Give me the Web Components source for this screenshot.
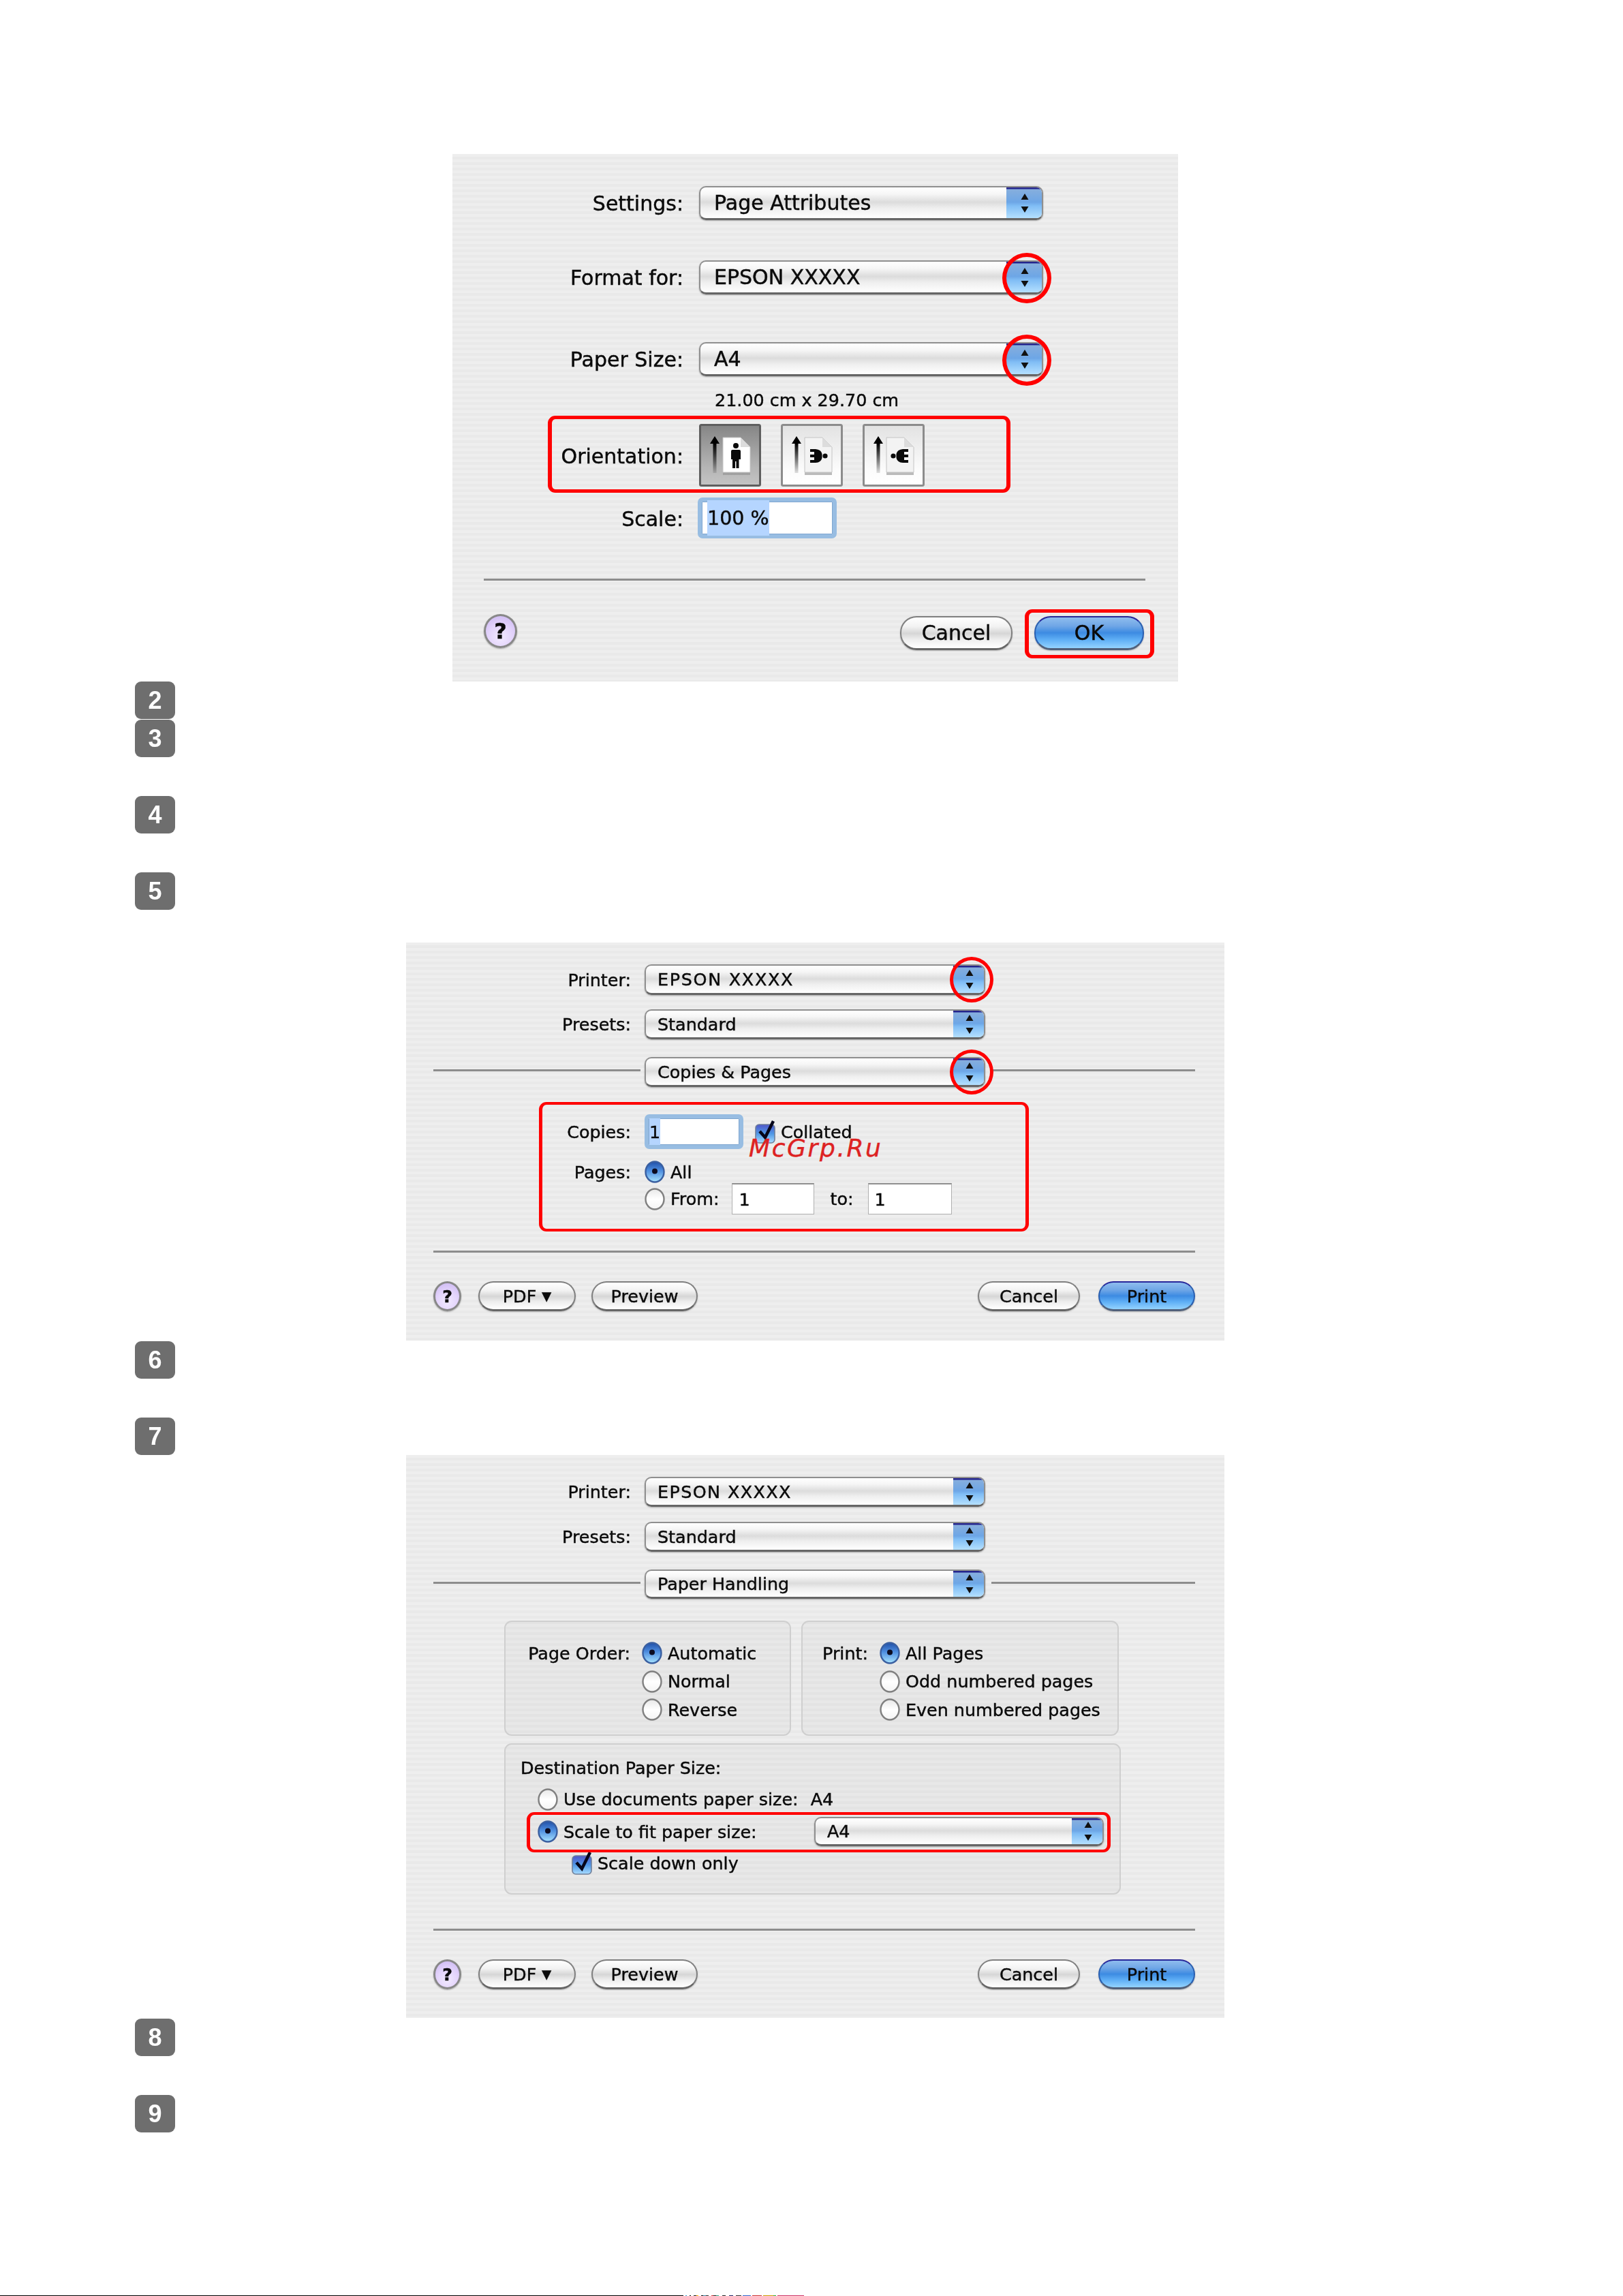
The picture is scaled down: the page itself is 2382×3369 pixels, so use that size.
<!DOCTYPE html>
<html lang="en"><head><meta charset="utf-8"><title>Epson print settings</title>
<style>
html,body{margin:0;padding:0;background:#fff}
</style></head><body>
<script>
function def(name, html){
  class C extends HTMLElement{
    constructor(){super();const r=this.attachShadow({mode:'open'});r.innerHTML=typeof html==='function'?html(this):html;}
    connectedCallback(){ if(typeof html==='function'){ this.shadowRoot.innerHTML=html(this);} }
  }
  customElements.define(name,C);
}
def('manual-page',`<style>:host{display:flex;flex-direction:column;position:relative;width:2382px;height:3369px;background:#fff;overflow:hidden;font-family:"DejaVu Sans",sans-serif;color:#161616}</style><slot></slot>`);
def('step-badge',`<style>:host{display:flex;flex:none;align-items:center;justify-content:center;box-sizing:border-box;width:59px;height:55px;margin-left:198px;background:#6e6e6e;border-radius:9px;color:#fff;font:700 36px/1 "Liberation Sans",sans-serif;filter:blur(.5px)}</style><slot></slot>`);
def('mac-dialog',`<style>:host{display:flow-root;flex:none;box-sizing:border-box;position:relative;background:repeating-linear-gradient(180deg,#eeeeee 0 4px,#e9e9e9 4px 8px);filter:blur(.75px);color:#0a0a0a;-webkit-text-stroke:.45px #0a0a0a}</style><slot></slot>`);
def('form-row',`<style>:host{display:grid;grid-template-columns:var(--lw,330px) 1fr;column-gap:var(--gap,20px);align-items:center}
.l{text-align:right;white-space:nowrap}.c{display:flex;align-items:center;min-width:0;white-space:nowrap}</style><div class="l"><slot name="label"></slot></div><div class="c"><slot></slot></div>`);
def('mac-popup',`<style>:host{display:block;position:relative;flex:none;height:45px;--step:43px}
.b{box-sizing:border-box;display:flex;height:100%;border:2px solid #8f8f8f;border-bottom:3px solid #666;border-radius:10px;overflow:hidden;background:linear-gradient(180deg,#fff 0,#f6f6f6 22%,#dcdcdc 48%,#efefef 68%,#fff 100%);box-shadow:0 1px 2px rgba(0,0,0,.3)}
.t{flex:1;display:flex;align-items:center;padding-left:var(--pad,17px);white-space:nowrap}
.s{flex:none;box-sizing:border-box;width:var(--step);display:flex;align-items:center;justify-content:center;padding-left:2px;background:linear-gradient(180deg,#24248c 0 2px,#86aedd 3px,#6da6e6 48%,#80bdf5 60%,#b4e0ff 100%)}
.r{display:none;position:absolute;box-sizing:border-box;top:var(--rt,-11px);bottom:var(--rb,-11px);right:-12px;width:var(--rw,64px);border:var(--rs,5px) solid #f00;border-radius:50%}
:host([ring]) .r{display:block}svg{display:block;width:14px;height:34px}</style>
<div class="b"><div class="t"><slot></slot></div><div class="s"><svg viewBox="0 0 14 34"><path d="M7 3l5.5 9h-11zM7 31l5.5-9h-11z" fill="#111"/></svg></div></div><div class="r"></div>`);
def('mac-button',`<style>:host{display:flex;flex:none;align-items:center;justify-content:center;box-sizing:border-box;height:44px;border:2px solid #7f7f7f;border-bottom:3px solid #666;border-radius:24px;background:linear-gradient(180deg,#fff 0,#f2f2f2 30%,#d6d6d6 52%,#eee 72%,#fff 100%);box-shadow:0 1px 2px rgba(0,0,0,.25);white-space:nowrap}
:host([primary]){border-color:#27279a #2a5fb0 #50607a;background:linear-gradient(180deg,#8fbdee 0,#6fa6e6 28%,#3d8be2 50%,#5eaef5 72%,#93d3ff 100%)}</style><slot></slot>`);
def('mac-help',`<style>:host{display:flex;flex:none;align-items:center;justify-content:center;box-sizing:border-box;width:41px;height:44px;border:3px solid #888;border-radius:50%;background:radial-gradient(circle at 50% 70%,#f2eaff 0,#e2d2fb 50%,#c9b4f0 100%);font-weight:700;white-space:nowrap;box-shadow:0 1px 2px rgba(0,0,0,.3)}</style><slot></slot>`);
def('mac-divider',`<style>:host{display:block;height:3px;background:#8d8d8d;flex:none}</style>`);
def('mac-group',`<style>:host{display:block;box-sizing:border-box;flex:none;border:2px solid #cfcfcf;border-radius:11px;background:rgba(0,0,0,.025)}</style><slot></slot>`);
def('mac-radio',el=>{const on=el.hasAttribute('checked');return `<style>:host{display:inline-flex;align-items:center;gap:8px;white-space:nowrap;flex:none}svg{display:block;width:30px;height:33px;flex:none}</style>
<svg viewBox="0 0 30 33"><defs><linearGradient id="g" x1="0" y1="0" x2="0" y2="1">${on?'<stop offset="0" stop-color="#1f4fa8"/><stop offset=".45" stop-color="#4f8fe0"/><stop offset="1" stop-color="#a8e4ff"/>':'<stop offset="0" stop-color="#e8e8e8"/><stop offset=".5" stop-color="#fff"/><stop offset="1" stop-color="#f4f4f4"/>'}</linearGradient></defs>
<ellipse cx="15" cy="16.5" rx="13.5" ry="15" fill="url(#g)" stroke="${on?'#3a5fa0':'#808080'}" stroke-width="2.4"/>${on?'<circle cx="15" cy="15.5" r="4" fill="#0c0c20"/>':''}</svg><slot></slot>`});
def('mac-check',`<style>:host{display:inline-flex;align-items:center;gap:8px;white-space:nowrap;flex:none}svg{display:block;width:30px;height:34px;flex:none;overflow:visible}</style>
<svg viewBox="0 0 30 34"><defs><linearGradient id="g" x1="0" y1="0" x2="0" y2="1"><stop offset="0" stop-color="#4f55c8"/><stop offset=".5" stop-color="#4f98e6"/><stop offset="1" stop-color="#a8dcff"/></linearGradient></defs>
<rect x="1" y="6" width="28" height="27" rx="5" fill="url(#g)" stroke="#6f7f9a" stroke-width="1.6"/><path d="M7 16l8 9L27 1" fill="none" stroke="#06061a" stroke-width="4.5"/></svg><slot></slot>`);
def('mac-field',`<style>:host{display:flex;flex:none;box-sizing:border-box;align-items:center;height:46px;background:#fff;border:1px solid #b0b0b0;border-top:2px solid #8f8f8f;padding-left:var(--pad,9px);white-space:nowrap}
:host([focus]){border:6px solid #98bde2;border-radius:7px;padding-left:var(--pad,8px);box-shadow:inset 0 0 0 1px #7fa6d0}
:host([selected]) .s{background:#b5d5ff}.s{display:flex;align-items:center;align-self:stretch;margin:var(--sm,0)}</style><span class="s"><slot></slot></span>`);
def('orient-button',el=>{const d=el.getAttribute('dir-to')||'up',p=el.hasAttribute('pressed');
const person='<g fill="#0a0a0a"><circle cx="54" cy="32" r="4"/><path d="M47 40q0-2 2-2h10q2 0 2 2v12h-2.5v13h-4v-10h-1.5v10h-4V52H47z"/></g>';
const lying='<circle cx="65" cy="47" r="3.6"/><path d="M43 37h8q8 .5 9.500 7v6q-1.500 6.500-9.500 7h-8v-4h6v-4h-6v-4h6v-4h-6z"/>';
const glyph=d==='up'?person:d==='right'?`<g fill="#0a0a0a">${lying}</g>`:`<g fill="#0a0a0a" transform="matrix(-1 0 0 1 110 0)">${lying}</g>`;
return `<style>:host{display:block;flex:none;width:91px;height:92px}svg{display:block;width:100%;height:100%}</style>
<svg viewBox="0 0 91 92"><defs>
<linearGradient id="b" x1="0" y1="0" x2="0" y2="1">${p?'<stop offset="0" stop-color="#858585"/><stop offset=".7" stop-color="#b5b5b5"/><stop offset="1" stop-color="#c4c4c4"/>':'<stop offset="0" stop-color="#e2e2e2"/><stop offset=".75" stop-color="#fcfcfc"/><stop offset="1" stop-color="#fff"/>'}</linearGradient>
<linearGradient id="a" x1="0" y1="0" x2="0" y2="1"><stop offset=".2" stop-color="#000"/><stop offset="1" stop-color="#000" stop-opacity=".12"/></linearGradient></defs>
<rect x="1.500" y="1.500" width="88" height="89" rx="2" fill="url(#b)" stroke="${p?'#5f5f5f':'#8c8c8c'}" stroke-width="3"/>
<path d="M23 18l7 11h-4.500v43h-5V29H16z" fill="url(#a)"/>
<path d="M35 21h26l14 14v40H35z" fill="#8f8f8f" opacity=".6"/>
<path d="M35 20h26l14 14v37H35z" fill="${p?'#fff':'#f3f3f3'}" stroke="#c4c4c4" stroke-width="1"/>
<path d="M61 20v14h14z" fill="#dcdcdc"/>${glyph}</svg>`});
def('red-box',`<style>:host{display:block;position:absolute;box-sizing:border-box;border:solid #f00;border-width:var(--ty,5px) var(--tx,6px);border-radius:11px}</style>`);
def('water-mark',`<style>:host{display:block;position:absolute;left:1099px;top:1667px;font:italic 400 36px/1 "DejaVu Sans",sans-serif;letter-spacing:2.6px;color:#dd2222;-webkit-text-stroke:.4px #dd2222;white-space:nowrap}</style><slot></slot>`);
def('scan-strip',el=>{
  const bits=[[1003,'#000'],[1006,'#fff'],[1008,'#39c'],[1012,'#fff'],[1014,'#111'],[1018,'#fff'],[1022,'#222'],[1025,'#fa0'],[1029,'#fff'],[1032,'#111'],[1036,'#48a'],[1040,'#333'],[1044,'#fff'],[1047,'#c33'],[1051,'#222'],[1055,'#3a8'],[1060,'#fff'],[1065,'#222'],[1070,'#fff'],[1076,'#226'],[1080,'#fff'],[1088,'#333'],[1090,'#fff'],[1102,'#36c'],[1104,'#fff'],[1118,'#c33'],[1120,'#fff'],[1135,'#c90'],[1139,'#3a3'],[1141,'#fff'],[1180,'#c36'],[1182,'#fff']];
  let p=0,s=[];bits.forEach(([e,c])=>{s.push(`${c} ${p}px ${e}px`);p=e});s.push('#fff 1182px');
  return `<style>:host{display:block;height:1px;margin-top:auto;flex:none;background:linear-gradient(90deg,${s.join(',')})}</style>`});
</script>

<manual-page>
  <mac-dialog style="margin:226px 0 0 664px;width:1065px;height:774px;font-size:30px;--lw:339px;--gap:23px">
    <form-row style="margin-top:47px"><span slot="label">Settings:</span><mac-popup style="width:505px;height:50px;--step:52px;--pad:20px">Page Attributes</mac-popup></form-row>
    <form-row style="margin-top:59px"><span slot="label">Format for:</span><mac-popup ring style="width:505px;height:50px;--step:52px;--pad:20px;--rw:72px;--rb:-13px;--rs:6px">EPSON&nbsp;XXXXX</mac-popup></form-row>
    <form-row style="margin-top:70px"><span slot="label">Paper Size:</span><mac-popup ring style="width:505px;height:50px;--step:52px;--pad:20px;--rw:72px;--rb:-14px;--rs:6px">A4</mac-popup></form-row>
    <form-row style="margin-top:20px;height:28px"><span slot="label"></span><span style="margin-left:23px;font-size:25.4px">21.00 cm x 29.70 cm</span></form-row>
    <form-row style="margin-top:22px"><span slot="label" style="display:inline-block;padding-top:3px">Orientation:</span>
      <orient-button pressed></orient-button><orient-button dir-to="right" style="margin-left:29px"></orient-button><orient-button dir-to="left" style="margin-left:29px"></orient-button></form-row>
    <form-row style="margin-top:16px"><span slot="label" style="display:inline-block;padding-top:3px">Scale:</span><mac-field focus selected style="width:204px;height:60px;--sm:-2px 0;font-size:28.500px;margin-left:-2px">100 %</mac-field></form-row>
    <mac-divider style="margin:59px 48px 0 46px"></mac-divider>
    <div style="display:flex;margin:49px 50px 0 46px;align-items:flex-start">
      <mac-help style="width:49px;height:50px;font-size:32px">?</mac-help>
      <mac-button style="margin:3px 0 0 auto;width:165px;height:50px">Cancel</mac-button>
      <mac-button primary style="margin:3px 0 0 32px;width:161px;height:50px">OK</mac-button>
    </div>
    <red-box style="left:140px;top:384px;width:679px;height:113px"></red-box>
    <red-box style="left:840px;top:668px;width:190px;height:72px"></red-box>
  </mac-dialog>

  <step-badge style="margin-top:0">2</step-badge>
  <step-badge style="margin-top:1px">3</step-badge>
  <step-badge style="margin-top:57px">4</step-badge>
  <step-badge style="margin-top:57px">5</step-badge>

  <mac-dialog style="margin:48px 0 0 596px;width:1201px;height:584px;font-size:25.4px;--lw:330px;--gap:20px;--tx:5px;--ty:4px">
    <form-row style="margin-top:32px"><span slot="label">Printer:</span><mac-popup ring style="width:500px;height:45px;--rs:5px;--step:45px"><span style="letter-spacing:1.7px">EPSON&nbsp;XXXXX</span></mac-popup></form-row>
    <form-row style="margin-top:21px"><span slot="label">Presets:</span><mac-popup style="width:500px;height:44px;--step:45px">Standard</mac-popup></form-row>
    <div style="display:flex;align-items:center;margin:26px 43px 0 40px">
      <mac-divider style="width:304px;margin:0 6px 6px 0"></mac-divider>
      <mac-popup ring style="width:500px;height:44px;--rs:5px;--step:45px">Copies &amp; Pages</mac-popup>
      <mac-divider style="flex:1;margin:0 0 6px 11px"></mac-divider>
    </div>
    <form-row style="margin-top:40px"><span slot="label">Copies:</span><mac-field focus selected style="width:145px;height:51px;--pad:1px">1</mac-field><mac-check style="margin-left:17px">Collated</mac-check></form-row>
    <form-row style="margin-top:17px;height:32px"><span slot="label">Pages:</span><mac-radio checked>All</mac-radio></form-row>
    <form-row style="margin-top:1px"><span slot="label"></span><mac-radio>From:</mac-radio><mac-field style="width:121px;margin-left:19px">1</mac-field><span style="margin-left:23px">to:</span><mac-field style="width:123px;margin-left:21px">1</mac-field></form-row>
    <mac-divider style="margin:53px 43px 0 40px"></mac-divider>
    <div style="display:flex;margin:42px 43px 0 40px">
      <mac-help>?</mac-help>
      <mac-button style="margin-left:25px;width:143px">PDF&nbsp;<span style="font-size:18px">▼</span></mac-button>
      <mac-button style="margin-left:23px;width:156px">Preview</mac-button>
      <mac-button style="margin-left:auto;width:150px">Cancel</mac-button>
      <mac-button primary style="margin-left:27px;width:142px">Print</mac-button>
    </div>
    <red-box style="left:195px;top:234px;width:719px;height:190px"></red-box>
  </mac-dialog>

  <step-badge style="margin-top:1px">6</step-badge>
  <step-badge style="margin-top:57px">7</step-badge>

  <mac-dialog style="width:1201px;height:826px;margin-left:596px;font-size:25.4px;--lw:330px;--gap:20px;--tx:5px;--ty:4px">
    <form-row style="margin-top:32px"><span slot="label">Printer:</span><mac-popup style="width:500px;height:44px;--step:45px"><span style="letter-spacing:1.4px">EPSON&nbsp;XXXXX</span></mac-popup></form-row>
    <form-row style="margin-top:22px"><span slot="label">Presets:</span><mac-popup style="width:500px;height:44px;--step:45px">Standard</mac-popup></form-row>
    <div style="display:flex;align-items:center;margin:26px 43px 0 40px">
      <mac-divider style="width:304px;margin:0 6px 4px 0"></mac-divider>
      <mac-popup style="width:500px;height:43px;--step:45px">Paper Handling</mac-popup>
      <mac-divider style="flex:1;margin:0 0 4px 9px"></mac-divider>
    </div>
    <div style="display:flex;gap:15px;margin:32px 0 0 144px">
      <mac-group style="width:421px;height:169px;padding-top:25px;--lw:183px;--gap:17px">
        <form-row style="height:41.500px"><span slot="label">Page Order:</span><mac-radio checked>Automatic</mac-radio></form-row>
        <form-row style="height:41.500px"><span slot="label"></span><mac-radio>Normal</mac-radio></form-row>
        <form-row style="height:41.500px"><span slot="label"></span><mac-radio>Reverse</mac-radio></form-row>
      </mac-group>
      <mac-group style="width:466px;height:169px;padding-top:25px;--lw:96px;--gap:17px">
        <form-row style="height:41.500px"><span slot="label">Print:</span><mac-radio checked>All Pages</mac-radio></form-row>
        <form-row style="height:41.500px"><span slot="label"></span><mac-radio>Odd numbered pages</mac-radio></form-row>
        <form-row style="height:41.500px"><span slot="label"></span><mac-radio>Even numbered pages</mac-radio></form-row>
      </mac-group>
    </div>
    <mac-group style="margin:11px 0 0 144px;width:905px;height:222px;padding:14px 0 0 22px">
      <div style="height:40px;display:flex;align-items:center">Destination Paper Size:</div>
      <div style="height:40px;display:flex;align-items:center;margin:6px 0 0 25px"><mac-radio>Use documents paper size:</mac-radio><span style="margin-left:18px">A4</span></div>
      <div style="height:43px;display:flex;align-items:center;margin:6px 0 0 25px;width:831px"><mac-radio checked>Scale to fit paper size:</mac-radio><mac-popup style="margin-left:auto;width:425px;height:43px;--step:45px">A4</mac-popup></div>
      <div style="height:30px;display:flex;align-items:center;margin:10px 0 0 75px"><mac-check>Scale down only</mac-check></div>
    </mac-group>
    <mac-divider style="margin:50px 43px 0 40px"></mac-divider>
    <div style="display:flex;margin:42px 43px 0 40px">
      <mac-help>?</mac-help>
      <mac-button style="margin-left:25px;width:143px">PDF&nbsp;<span style="font-size:18px">▼</span></mac-button>
      <mac-button style="margin-left:23px;width:156px">Preview</mac-button>
      <mac-button style="margin-left:auto;width:150px">Cancel</mac-button>
      <mac-button primary style="margin-left:27px;width:142px">Print</mac-button>
    </div>
    <red-box style="left:177px;top:524px;width:857px;height:59px"></red-box>
  </mac-dialog>

  <step-badge style="margin-top:1px">8</step-badge>
  <step-badge style="margin-top:57px">9</step-badge>
  <scan-strip></scan-strip>
  <water-mark>McGrp.Ru</water-mark>
</manual-page>
</body></html>
